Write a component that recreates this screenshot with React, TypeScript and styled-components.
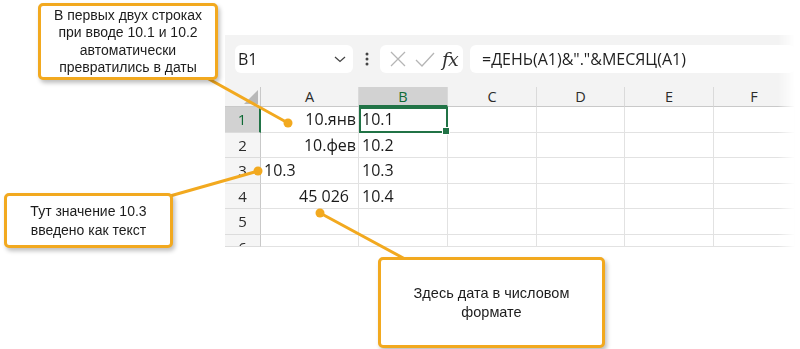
import React from "react";
import styled, { createGlobalStyle } from "styled-components";

const Global = createGlobalStyle`
  html, body { margin: 0; padding: 0; background: #ffffff; }
  body { width: 800px; height: 349px; overflow: hidden; }
`;

const Page = styled.div`
  position: relative;
  width: 800px;
  height: 349px;
  box-sizing: border-box;
  padding: 35px 5px 0 225px;
  font-family: "Open Sans", "Noto Sans", sans-serif;
`;

const Sheet = styled.div`
  width: 570px;
  background: #f3f3f3;
  box-shadow: 0 -3px 6px rgba(0, 0, 0, 0.04);
  -webkit-mask-image: linear-gradient(to right, #000 97%, transparent 100%);
  mask-image: linear-gradient(to right, #000 97%, transparent 100%);
`;

const FormulaBar = styled.div`
  display: flex;
  align-items: center;
  height: 52px;
  box-sizing: border-box;
  padding: 10px 0 14px 10px;
`;

const Box = styled.div<{ $w?: number; $grow?: boolean }>`
  display: flex;
  align-items: center;
  height: 28px;
  box-sizing: border-box;
  background: #ffffff;
  border-radius: 6px;
  ${(p) => (p.$w ? `width: ${p.$w}px;` : "")}
  ${(p) => (p.$grow ? "flex: 1;" : "")}
  color: #1f1f1f;
  font-size: 16px;
`;

const NameText = styled.span`
  flex: 1;
  padding-left: 3px;
  font-size: 16px;
`;

const Dots = styled.div`
  width: 27px;
  display: flex;
  justify-content: center;
`;

const FxText = styled.span`
  font-family: "DejaVu Serif", "Liberation Serif", serif;
  font-style: italic;
  font-size: 19px;
  color: #333;
  margin-left: 6px;
  letter-spacing: -1px;
`;

const Gap = styled.div`
  width: 7px;
`;

const FormulaText = styled.span`
  padding-left: 12px;
  font-size: 16px;
  white-space: nowrap;
`;

const Grid = styled.div`
  display: grid;
  grid-template-columns: 36px 98px 89px 89px 88px 89px 81px;
  grid-template-rows: 20px repeat(5, 25.5px) 12.5px;
  overflow: hidden;
  background: #ffffff;
`;

const Corner = styled.div`
  background: #f3f3f3;
  border-right: 1px solid #c9c9c9;
  border-bottom: 1px solid #c9c9c9;
  box-sizing: border-box;
  position: relative;
  &::after {
    content: "";
    position: absolute;
    right: 2px;
    bottom: 2px;
    width: 0;
    height: 0;
    border-left: 14px solid transparent;
    border-bottom: 14px solid #b8b8b8;
  }
`;

const ColHead = styled.div<{ $sel?: boolean }>`
  display: flex;
  align-items: center;
  justify-content: center;
  box-sizing: border-box;
  font-size: 14.5px;
  background: ${(p) => (p.$sel ? "#d2d2d2" : "#f3f3f3")};
  color: ${(p) => (p.$sel ? "#0f6a35" : "#2b2b2b")};
  border-right: 1px solid #dadada;
  border-bottom: ${(p) => (p.$sel ? "2px solid #217346" : "1px solid #c9c9c9")};
`;

const RowHead = styled.div<{ $sel?: boolean }>`
  display: flex;
  align-items: flex-start;
  justify-content: center;
  overflow: hidden;
  box-sizing: border-box;
  font-size: 15px;
  line-height: 25px;
  background: ${(p) => (p.$sel ? "#d2d2d2" : "#f5f5f5")};
  color: ${(p) => (p.$sel ? "#0f6a35" : "#2b2b2b")};
  border-right: ${(p) => (p.$sel ? "2px solid #217346" : "1px solid #c9c9c9")};
  border-bottom: 1px solid #dcdcdc;
`;

const Cell = styled.div<{ $align?: "left" | "right"; $pr?: number; $sel?: boolean }>`
  position: relative;
  display: flex;
  align-items: center;
  justify-content: ${(p) => (p.$align === "right" ? "flex-end" : "flex-start")};
  box-sizing: border-box;
  padding: 0 ${(p) => p.$pr ?? 2}px 0 3px;
  font-size: 16px;
  color: #1a1a1a;
  white-space: nowrap;
  border-right: 1px solid #e2e2e2;
  border-bottom: 1px solid #e2e2e2;
  ${(p) =>
    p.$sel
      ? `
    outline: 2px solid #217346;
    outline-offset: -2px;
    z-index: 1;
    &::after {
      content: "";
      position: absolute;
      right: -3px;
      bottom: -3px;
      width: 6px;
      height: 6px;
      background: #217346;
      border: 1px solid #fff;
    }
  `
      : ""}
`;

const Callout = styled.div<{ $x: number; $y: number; $w: number; $h: number }>`
  position: absolute;
  left: ${(p) => p.$x}px;
  top: ${(p) => p.$y}px;
  width: ${(p) => p.$w}px;
  height: ${(p) => p.$h}px;
  box-sizing: border-box;
  border: 3px solid #f2a91f;
  border-radius: 5px;
  background: #ffffff;
  box-shadow: 2px 3px 4px rgba(0, 0, 0, 0.25);
  display: flex;
  align-items: center;
  justify-content: center;
  text-align: center;
  font-family: "Liberation Sans", Arial, sans-serif;
  color: #1c1c1c;
  z-index: 3;
`;

const CalloutText = styled.div<{ $lh?: number; $fs?: number }>`
  line-height: ${(p) => p.$lh ?? 17.5}px;
  font-size: ${(p) => p.$fs ?? 14}px;
`;

const Overlay = styled.svg`
  position: absolute;
  left: 0;
  top: 0;
  width: 800px;
  height: 349px;
  pointer-events: none;
  z-index: 2;
`;

const cols = ["A", "B", "C", "D", "E", "F"];

type Row = { n: number; a?: string; aAlign?: "left" | "right"; aPr?: number; b?: string };
const rows: Row[] = [
  { n: 1, a: "10.янв", aAlign: "right", b: "10.1" },
  { n: 2, a: "10.фев", aAlign: "right", b: "10.2" },
  { n: 3, a: "10.3", aAlign: "left", b: "10.3" },
  { n: 4, a: "45 026", aAlign: "right", aPr: 9, b: "10.4" },
  { n: 5 },
  { n: 6 },
];

const ORANGE = "#f2a91f";

export default function App() {
  return (
    <>
      <Global />
      <Page>
        <Sheet>
          <FormulaBar>
            <Box $w={118}>
              <NameText>B1</NameText>
              <svg width="14" height="10" viewBox="0 0 14 10" style={{ marginRight: 6 }}>
                <path d="M2 3 L7 7.5 L12 3" fill="none" stroke="#444" strokeWidth="1.3" />
              </svg>
            </Box>
            <Dots>
              <svg width="4" height="14" viewBox="0 0 4 14">
                <circle cx="2" cy="2" r="1.5" fill="#444" />
                <circle cx="2" cy="7" r="1.5" fill="#444" />
                <circle cx="2" cy="12" r="1.5" fill="#444" />
              </svg>
            </Dots>
            <Box $w={83}>
              <svg width="20" height="20" viewBox="0 0 20 20" style={{ marginLeft: 8 }}>
                <path d="M3 3 L17 17 M17 3 L3 17" stroke="#b5b5b5" strokeWidth="1.3" fill="none" />
              </svg>
              <svg width="22" height="20" viewBox="0 0 22 20" style={{ marginLeft: 6 }}>
                <path d="M2 11 L8 17 L20 4" stroke="#b5b5b5" strokeWidth="1.3" fill="none" />
              </svg>
              <FxText>fx</FxText>
            </Box>
            <Gap />
            <Box $grow>
              <FormulaText>=ДЕНЬ(A1)&amp;"."&amp;МЕСЯЦ(A1)</FormulaText>
            </Box>
          </FormulaBar>
          <Grid>
            <Corner />
            {cols.map((c) => (
              <ColHead key={c} $sel={c === "B"}>
                {c}
              </ColHead>
            ))}
            {rows.map((r) => (
              <React.Fragment key={r.n}>
                <RowHead $sel={r.n === 1}>{r.n}</RowHead>
                <Cell $align={r.aAlign} $pr={r.aPr}>
                  {r.a}
                </Cell>
                <Cell $sel={r.n === 1}>{r.b}</Cell>
                <Cell />
                <Cell />
                <Cell />
                <Cell />
              </React.Fragment>
            ))}
          </Grid>
        </Sheet>

        <Overlay viewBox="0 0 800 349">
          <line x1="207" y1="78" x2="288" y2="123" stroke={ORANGE} strokeWidth="3" strokeLinecap="round" />
          <circle cx="288" cy="123" r="4.5" fill={ORANGE} />
          <line x1="170" y1="196" x2="258" y2="171" stroke={ORANGE} strokeWidth="3" strokeLinecap="round" />
          <circle cx="258" cy="171" r="4.5" fill={ORANGE} />
          <line x1="405" y1="259" x2="320" y2="213" stroke={ORANGE} strokeWidth="3" strokeLinecap="round" />
          <circle cx="320" cy="213" r="4.5" fill={ORANGE} />
        </Overlay>

        <Callout $x={38} $y={3} $w={180} $h={77}>
          <CalloutText>
            В первых двух строках
            <br />
            при вводе 10.1 и 10.2
            <br />
            автоматически
            <br />
            превратились в даты
          </CalloutText>
        </Callout>

        <Callout $x={4} $y={193} $w={169} $h={55}>
          <CalloutText $lh={19}>
            Тут значение 10.3
            <br />
            введено как текст
          </CalloutText>
        </Callout>

        <Callout $x={378} $y={257} $w={227} $h={91}>
          <CalloutText $lh={19} $fs={14.5}>
            Здесь дата в числовом
            <br />
            формате
          </CalloutText>
        </Callout>
      </Page>
    </>
  );
}
